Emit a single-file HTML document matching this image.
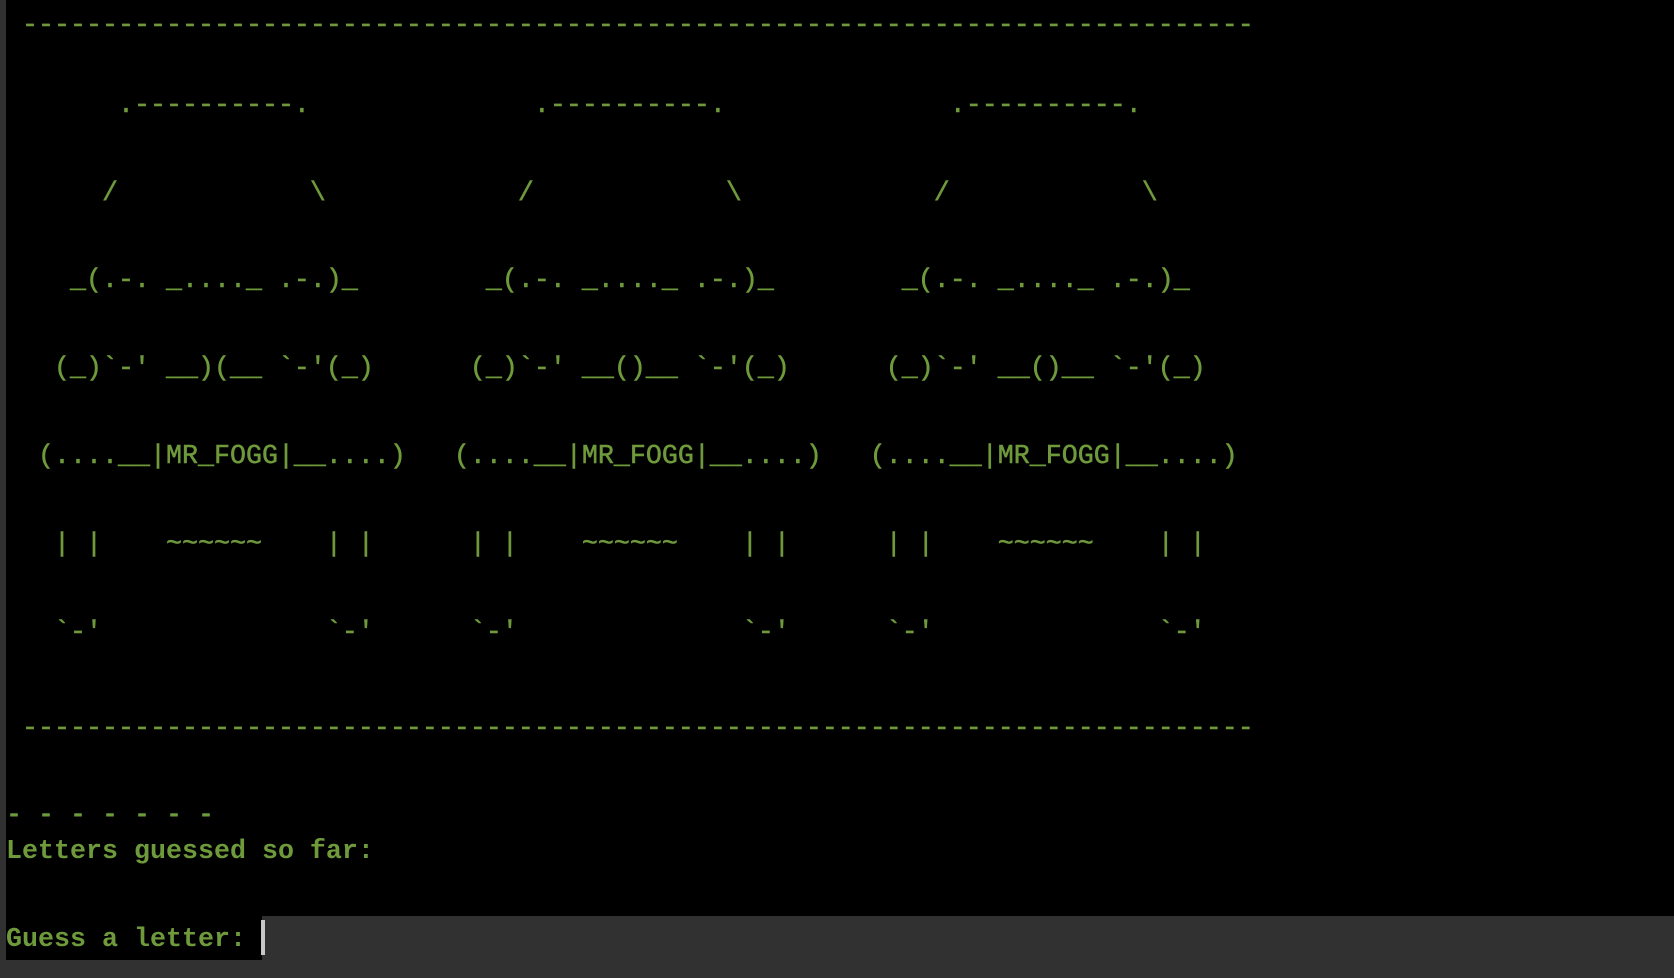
<!DOCTYPE html>
<html><head><meta charset="utf-8"><style>
html,body{margin:0;padding:0;width:1674px;height:978px;overflow:hidden;background:#313131;}
#term{position:absolute;left:6px;top:0;width:1668px;height:916px;background:#000;}
#blk{position:absolute;left:6px;top:916px;width:256px;height:44px;background:#000;}
#cur{position:absolute;left:261px;top:920px;width:4px;height:35px;background:#c8c8c8;}
pre{position:absolute;left:6px;top:-3px;margin:0;font-family:"Liberation Mono",monospace;font-size:26.67px;line-height:43.9px;color:#6f9a3c;white-space:pre;-webkit-text-stroke:0.5px #6f9a3c;}
.b{font-weight:bold;-webkit-text-stroke:0;}
.d{position:relative;top:8px;}
</style></head><body>
<div id="term"></div><div id="blk"></div>
<pre><span class="d"> -----------------------------------------------------------------------------</span>

       .----------.              .----------.              .----------.

      /            \            /            \            /            \

    _(.-. _...._ .-.)_        _(.-. _...._ .-.)_        _(.-. _...._ .-.)_

   (_)`-' __)(__ `-'(_)      (_)`-' __()__ `-'(_)      (_)`-' __()__ `-'(_)

  (....__|MR_FOGG|__....)   (....__|MR_FOGG|__....)   (....__|MR_FOGG|__....)

   | |    ~~~~~~    | |      | |    ~~~~~~    | |      | |    ~~~~~~    | |

   `-'              `-'      `-'              `-'      `-'              `-'

<span class="d"> -----------------------------------------------------------------------------</span>

<span class="b d">- - - - - - -</span>
<span class="b">Letters guessed so far:</span>

<span class="b">Guess a letter: </span></pre>
<div id="cur"></div>
</body></html>
